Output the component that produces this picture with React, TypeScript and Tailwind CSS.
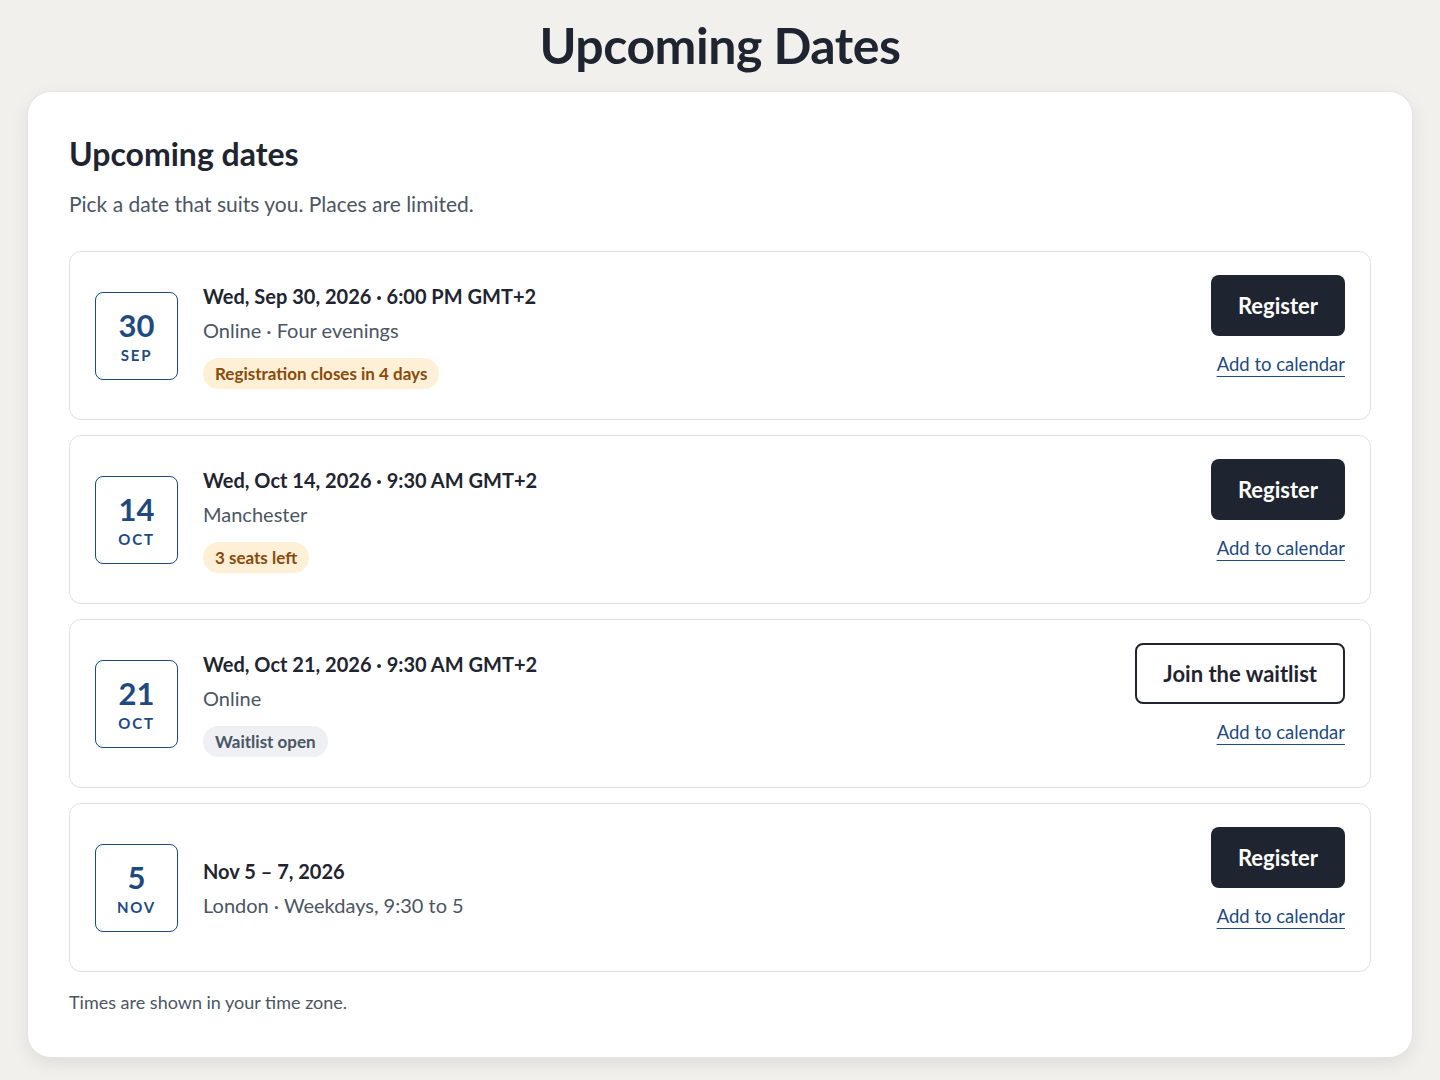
import React from 'react'

type Tone = 'warn' | 'muted'

type Session = {
  day: string
  month: string
  title: string
  detail: string
  badge?: { text: string; tone: Tone }
  action: 'register' | 'waitlist'
}

const SESSIONS: Session[] = [
  {
    day: '30',
    month: 'SEP',
    title: 'Wed, Sep 30, 2026 · 6:00 PM GMT+2',
    detail: 'Online · Four evenings',
    badge: { text: 'Registration closes in 4 days', tone: 'warn' },
    action: 'register',
  },
  {
    day: '14',
    month: 'OCT',
    title: 'Wed, Oct 14, 2026 · 9:30 AM GMT+2',
    detail: 'Manchester',
    badge: { text: '3 seats left', tone: 'warn' },
    action: 'register',
  },
  {
    day: '21',
    month: 'OCT',
    title: 'Wed, Oct 21, 2026 · 9:30 AM GMT+2',
    detail: 'Online',
    badge: { text: 'Waitlist open', tone: 'muted' },
    action: 'waitlist',
  },
  {
    day: '5',
    month: 'NOV',
    title: 'Nov 5 – 7, 2026',
    detail: 'London · Weekdays, 9:30 to 5',
    action: 'register',
  },
]

const font = { fontFamily: 'Lato, "Noto Sans", sans-serif' }

export default function App() {
  return (
    <div style={font} className="min-h-screen bg-[#f1f0ec] px-[27px] pb-6 pt-[14px] text-[#1f2530]">
      <h1 className="text-center text-[50px] font-bold leading-[62px] tracking-[-0.01em]">Upcoming Dates</h1>

      <div className="mt-[15px] rounded-[24px] border border-[#e6e5e1] bg-white px-[41px] pb-[42px] pt-[40px] shadow-[0_6px_18px_rgba(0,0,0,0.08)]">
        <h2 className="text-[32px] font-bold leading-[44px]">Upcoming dates</h2>
        <p className="mt-[14px] text-[21px] leading-[28px] text-[#4b5563]">Pick a date that suits you. Places are limited.</p>

        <ul className="mt-[33px] flex flex-col gap-[15px]">
          {SESSIONS.map((s) => (
            <li
              key={s.day + s.month}
              className="flex min-h-[169px] items-center gap-[25px] rounded-[12px] border border-[#dfe1e5] px-[25px]"
            >
              {/* calendar tile */}
              <div className="flex h-[88px] w-[83px] shrink-0 flex-col items-center justify-center rounded-[8px] border-[1.5px] border-[#1e4a80] text-[#1e4a80]">
                <span className="text-[31px] font-bold leading-[34px]">{s.day}</span>
                <span className="mt-[4px] text-[15px] font-bold leading-[18px] tracking-[0.12em]">{s.month}</span>
              </div>

              <div className="min-w-0 flex-1">
                <div className="text-[20px] font-bold leading-[28px]">{s.title}</div>
                <div className="mt-[6px] text-[20px] leading-[28px] text-[#4b5563]">{s.detail}</div>
                {s.badge && (
                  <span
                    className={`mt-[14px] inline-flex h-[31px] items-center rounded-full px-[12px] text-[17px] font-bold ${
                      s.badge.tone === 'warn' ? 'bg-[#fdf0d6] text-[#8a4a0b]' : 'bg-[#eef0f3] text-[#4b5563]'
                    }`}
                  >
                    {s.badge.text}
                  </span>
                )}
              </div>

              <div className="flex shrink-0 flex-col items-end self-start pt-[23px]">
                {s.action === 'register' ? (
                  <button className="h-[61px] rounded-[8px] bg-[#1f2530] px-[27px] text-[22px] font-bold text-white">
                    Register
                  </button>
                ) : (
                  <button className="h-[61px] rounded-[8px] border-2 border-[#1f2530] bg-white px-[26px] text-[22px] font-bold text-[#1f2530]">
                    Join the waitlist
                  </button>
                )}
                <a
                  href="#"
                  className="mt-[14px] text-[18.5px] leading-[28px] text-[#1e4a80] underline decoration-1 underline-offset-[5px]"
                >
                  Add to calendar
                </a>
              </div>
            </li>
          ))}
        </ul>

        <p className="mt-[17px] text-[18px] leading-[26px] text-[#4b5563]">Times are shown in your time zone.</p>
      </div>
    </div>
  )
}
